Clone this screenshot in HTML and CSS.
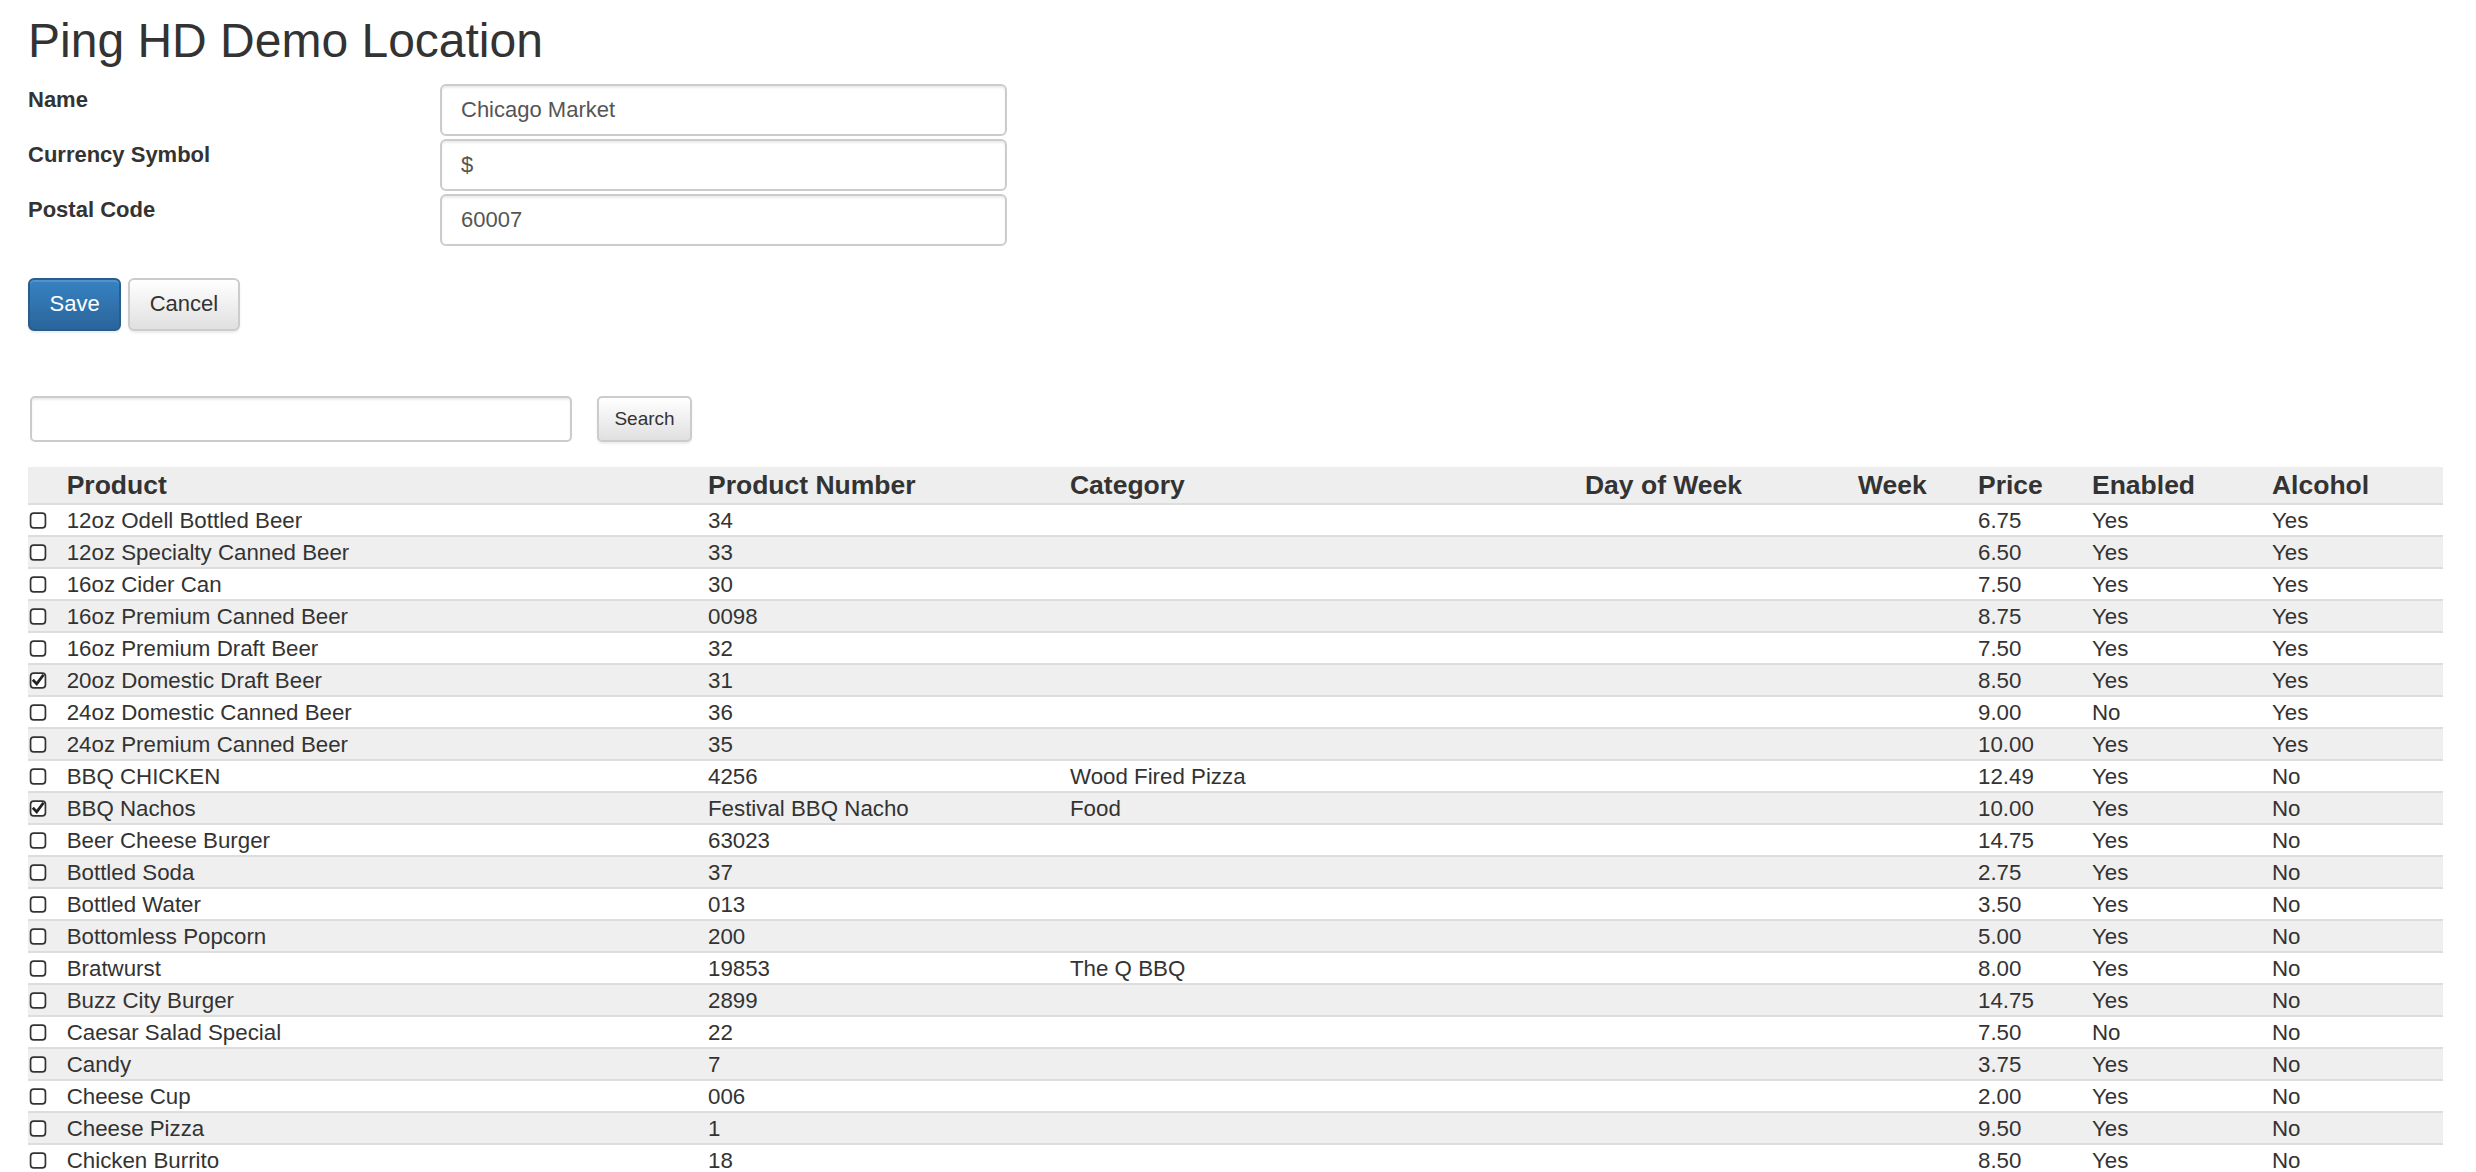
FILE: index.html
```html
<!DOCTYPE html>
<html lang="en">
<head>
<meta charset="utf-8">
<title>Ping HD Demo Location</title>
<link rel="stylesheet" href="styles.css">
</head>
<body>
<div class="page">
  <h2 class="title">Ping HD Demo Location</h2>
  <form class="loc-form">
    <div class="form-row">
      <label class="form-label">Name</label>
      <input class="form-input" type="text" value="Chicago Market">
    </div>
    <div class="form-row">
      <label class="form-label">Currency Symbol</label>
      <input class="form-input" type="text" value="$">
    </div>
    <div class="form-row">
      <label class="form-label">Postal Code</label>
      <input class="form-input" type="text" value="60007">
    </div>
    <div class="form-actions">
      <button type="button" class="btn btn-primary">Save</button>
      <button type="button" class="btn btn-default">Cancel</button>
    </div>
  </form>

  <div class="search-row">
    <input class="search-input" type="text">
    <button type="button" class="btn-sm">Search</button>
  </div>

  <table class="products">
    <colgroup>
      <col class="c-cb"><col class="c-product"><col class="c-number"><col class="c-category"><col class="c-day"><col class="c-week"><col class="c-price"><col class="c-enabled"><col class="c-alcohol">
    </colgroup>
    <thead>
      <tr><th></th><th>Product</th><th>Product Number</th><th>Category</th><th>Day of Week</th><th>Week</th><th>Price</th><th>Enabled</th><th>Alcohol</th></tr>
    </thead>
    <tbody>
      <tr><td class="cb"><svg class="box" viewBox="0 0 16 16"><rect x="1" y="1" width="14" height="14" rx="3"/></svg></td><td>12oz Odell Bottled Beer</td><td>34</td><td></td><td></td><td></td><td>6.75</td><td>Yes</td><td>Yes</td></tr>
      <tr><td class="cb"><svg class="box" viewBox="0 0 16 16"><rect x="1" y="1" width="14" height="14" rx="3"/></svg></td><td>12oz Specialty Canned Beer</td><td>33</td><td></td><td></td><td></td><td>6.50</td><td>Yes</td><td>Yes</td></tr>
      <tr><td class="cb"><svg class="box" viewBox="0 0 16 16"><rect x="1" y="1" width="14" height="14" rx="3"/></svg></td><td>16oz Cider Can</td><td>30</td><td></td><td></td><td></td><td>7.50</td><td>Yes</td><td>Yes</td></tr>
      <tr><td class="cb"><svg class="box" viewBox="0 0 16 16"><rect x="1" y="1" width="14" height="14" rx="3"/></svg></td><td>16oz Premium Canned Beer</td><td>0098</td><td></td><td></td><td></td><td>8.75</td><td>Yes</td><td>Yes</td></tr>
      <tr><td class="cb"><svg class="box" viewBox="0 0 16 16"><rect x="1" y="1" width="14" height="14" rx="3"/></svg></td><td>16oz Premium Draft Beer</td><td>32</td><td></td><td></td><td></td><td>7.50</td><td>Yes</td><td>Yes</td></tr>
      <tr><td class="cb"><svg class="box" viewBox="0 0 16 16"><rect x="1" y="1" width="14" height="14" rx="3"/><path class="tick" d="M4 8.2 L6.8 11.2 L12.4 3.6"/></svg></td><td>20oz Domestic Draft Beer</td><td>31</td><td></td><td></td><td></td><td>8.50</td><td>Yes</td><td>Yes</td></tr>
      <tr><td class="cb"><svg class="box" viewBox="0 0 16 16"><rect x="1" y="1" width="14" height="14" rx="3"/></svg></td><td>24oz Domestic Canned Beer</td><td>36</td><td></td><td></td><td></td><td>9.00</td><td>No</td><td>Yes</td></tr>
      <tr><td class="cb"><svg class="box" viewBox="0 0 16 16"><rect x="1" y="1" width="14" height="14" rx="3"/></svg></td><td>24oz Premium Canned Beer</td><td>35</td><td></td><td></td><td></td><td>10.00</td><td>Yes</td><td>Yes</td></tr>
      <tr><td class="cb"><svg class="box" viewBox="0 0 16 16"><rect x="1" y="1" width="14" height="14" rx="3"/></svg></td><td>BBQ CHICKEN</td><td>4256</td><td>Wood Fired Pizza</td><td></td><td></td><td>12.49</td><td>Yes</td><td>No</td></tr>
      <tr><td class="cb"><svg class="box" viewBox="0 0 16 16"><rect x="1" y="1" width="14" height="14" rx="3"/><path class="tick" d="M4 8.2 L6.8 11.2 L12.4 3.6"/></svg></td><td>BBQ Nachos</td><td>Festival BBQ Nacho</td><td>Food</td><td></td><td></td><td>10.00</td><td>Yes</td><td>No</td></tr>
      <tr><td class="cb"><svg class="box" viewBox="0 0 16 16"><rect x="1" y="1" width="14" height="14" rx="3"/></svg></td><td>Beer Cheese Burger</td><td>63023</td><td></td><td></td><td></td><td>14.75</td><td>Yes</td><td>No</td></tr>
      <tr><td class="cb"><svg class="box" viewBox="0 0 16 16"><rect x="1" y="1" width="14" height="14" rx="3"/></svg></td><td>Bottled Soda</td><td>37</td><td></td><td></td><td></td><td>2.75</td><td>Yes</td><td>No</td></tr>
      <tr><td class="cb"><svg class="box" viewBox="0 0 16 16"><rect x="1" y="1" width="14" height="14" rx="3"/></svg></td><td>Bottled Water</td><td>013</td><td></td><td></td><td></td><td>3.50</td><td>Yes</td><td>No</td></tr>
      <tr><td class="cb"><svg class="box" viewBox="0 0 16 16"><rect x="1" y="1" width="14" height="14" rx="3"/></svg></td><td>Bottomless Popcorn</td><td>200</td><td></td><td></td><td></td><td>5.00</td><td>Yes</td><td>No</td></tr>
      <tr><td class="cb"><svg class="box" viewBox="0 0 16 16"><rect x="1" y="1" width="14" height="14" rx="3"/></svg></td><td>Bratwurst</td><td>19853</td><td>The Q BBQ</td><td></td><td></td><td>8.00</td><td>Yes</td><td>No</td></tr>
      <tr><td class="cb"><svg class="box" viewBox="0 0 16 16"><rect x="1" y="1" width="14" height="14" rx="3"/></svg></td><td>Buzz City Burger</td><td>2899</td><td></td><td></td><td></td><td>14.75</td><td>Yes</td><td>No</td></tr>
      <tr><td class="cb"><svg class="box" viewBox="0 0 16 16"><rect x="1" y="1" width="14" height="14" rx="3"/></svg></td><td>Caesar Salad Special</td><td>22</td><td></td><td></td><td></td><td>7.50</td><td>No</td><td>No</td></tr>
      <tr><td class="cb"><svg class="box" viewBox="0 0 16 16"><rect x="1" y="1" width="14" height="14" rx="3"/></svg></td><td>Candy</td><td>7</td><td></td><td></td><td></td><td>3.75</td><td>Yes</td><td>No</td></tr>
      <tr><td class="cb"><svg class="box" viewBox="0 0 16 16"><rect x="1" y="1" width="14" height="14" rx="3"/></svg></td><td>Cheese Cup</td><td>006</td><td></td><td></td><td></td><td>2.00</td><td>Yes</td><td>No</td></tr>
      <tr><td class="cb"><svg class="box" viewBox="0 0 16 16"><rect x="1" y="1" width="14" height="14" rx="3"/></svg></td><td>Cheese Pizza</td><td>1</td><td></td><td></td><td></td><td>9.50</td><td>Yes</td><td>No</td></tr>
      <tr><td class="cb"><svg class="box" viewBox="0 0 16 16"><rect x="1" y="1" width="14" height="14" rx="3"/></svg></td><td>Chicken Burrito</td><td>18</td><td></td><td></td><td></td><td>8.50</td><td>Yes</td><td>No</td></tr>
    </tbody>
  </table>
</div>
</body>
</html>
```

FILE: styles.css
```css
html, body {
  margin: 0;
  padding: 0;
  overflow: hidden;
  background: #fff;
}

body {
  font-family: "Liberation Sans", Arial, Helvetica, sans-serif;
  font-size: 22px;
  color: #333;
}

.page {
  padding: 0 33px 0 28px;
}

.title {
  font-size: 48px;
  font-weight: normal;
  line-height: 1.1;
  margin: 15px 0 16px;
  color: #333;
}

.loc-form {
  display: flex;
  flex-direction: column;
  gap: 3px;
}

.form-row {
  display: grid;
  grid-template-columns: 412px 567px;
  align-items: start;
}

.form-label {
  font-weight: bold;
  font-size: 22px;
  line-height: 31.6px;
  color: #333;
}

.form-input {
  box-sizing: border-box;
  height: 52px;
  width: 567px;
  margin: 0;
  padding: 0 19px;
  font-family: inherit;
  font-size: 22px;
  color: #555;
  background: #fff;
  border: 2px solid #ccc;
  border-radius: 6px;
  box-shadow: inset 0 2px 2px rgba(0, 0, 0, 0.075);
  outline: none;
}

.form-actions {
  display: flex;
  gap: 7px;
  margin-top: 29px;
}

.btn {
  box-sizing: border-box;
  height: 53px;
  padding: 0 19.5px;
  font-family: inherit;
  font-size: 22px;
  border-radius: 6px;
  border: 2px solid transparent;
  cursor: pointer;
}

.btn-primary {
  color: #fff;
  background: linear-gradient(to bottom, #3782c2 0%, #2a659b 100%);
  border-color: #2a5d8c;
  box-shadow: inset 0 2px 0 rgba(255, 255, 255, 0.15), 0 2px 2px rgba(0, 0, 0, 0.075);
}

.btn-default {
  color: #333;
  background: linear-gradient(to bottom, #ffffff 0%, #e0e0e0 100%);
  border-color: #ccc;
  box-shadow: inset 0 2px 0 rgba(255, 255, 255, 0.15), 0 2px 2px rgba(0, 0, 0, 0.075);
}

.search-row {
  display: flex;
  gap: 25px;
  margin-top: 65px;
  padding-left: 2px;
}

.search-input {
  box-sizing: border-box;
  width: 542px;
  height: 46px;
  margin: 0;
  border: 2px solid #ccc;
  border-radius: 5px;
  box-shadow: inset 0 2px 2px rgba(0, 0, 0, 0.075);
  outline: none;
}

.btn-sm {
  box-sizing: border-box;
  width: 95px;
  height: 46px;
  padding: 0;
  font-family: inherit;
  font-size: 19px;
  color: #333;
  background: linear-gradient(to bottom, #ffffff 0%, #e0e0e0 100%);
  border: 2px solid #ccc;
  border-radius: 5px;
  box-shadow: inset 0 2px 0 rgba(255, 255, 255, 0.15), 0 2px 2px rgba(0, 0, 0, 0.075);
}

.products {
  margin-top: 25px;
  width: 2415px;
  table-layout: fixed;
  border-collapse: collapse;
  border-spacing: 0;
}

.c-cb { width: 38.7px; }
.c-product { width: 641.3px; }
.c-number { width: 362px; }
.c-category { width: 515px; }
.c-day { width: 273px; }
.c-week { width: 120px; }
.c-price { width: 114px; }
.c-enabled { width: 180px; }
.c-alcohol { width: 171px; }

.products thead tr {
  background: #eeeeee;
}

.products th {
  padding: 0;
  text-align: left;
  font-size: 26.5px;
  font-weight: bold;
  line-height: 36px;
  color: #333;
  border-bottom: 2px solid #dddddd;
  white-space: nowrap;
}

.products td {
  padding: 2px 0 0;
  font-size: 22.3px;
  line-height: 28px;
  height: 28px;
  border-bottom: 2px solid #dddddd;
  white-space: nowrap;
  vertical-align: top;
}

.products tbody tr:nth-child(even) {
  background: #efefef;
}

.products td.cb {
  padding-left: 1px;
}

.box {
  display: block;
  width: 18px;
  height: 17px;
  margin-top: 5px;
}

.box rect {
  fill: #fff;
  stroke: #333;
  stroke-width: 1.6;
}

.box .tick {
  fill: none;
  stroke: #222;
  stroke-width: 2.6;
  stroke-linecap: square;
}
```
